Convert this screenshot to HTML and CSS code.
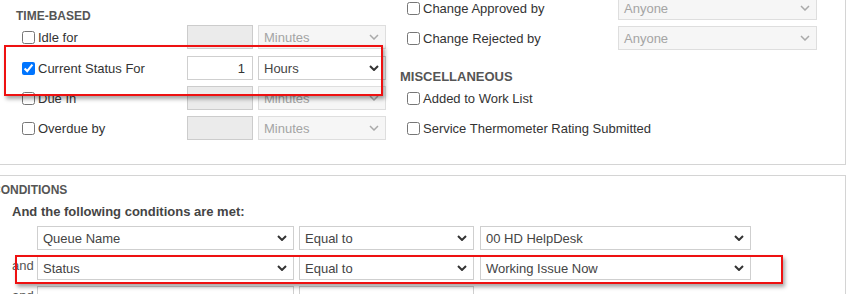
FILE: index.html
```html
<!DOCTYPE html>
<html lang="en">
<head>
    <meta charset="UTF-8">
    <title>Rule Triggers</title>
    <link rel="stylesheet" href="styles.css">
</head>
<body>
    <div class="page">
        <!-- Triggers panel -->
        <div class="panel triggers">
            <div class="col-left">
                <h3 class="section-title">TIME-BASED</h3>
                <div class="time-row first">
                    <label class="check"><input type="checkbox">Idle for</label>
                    <div class="num-input disabled"></div>
                    <div class="select disabled"><span>Minutes</span><svg width="10" height="6" viewBox="0 0 10 6"><polyline points="1,1 5,5 9,1"/></svg></div>
                </div>
                <div class="time-row">
                    <label class="check"><input type="checkbox" checked>Current Status For</label>
                    <div class="num-input">1</div>
                    <div class="select"><span>Hours</span><svg width="10" height="6" viewBox="0 0 10 6"><polyline points="1,1 5,5 9,1"/></svg></div>
                </div>
                <div class="time-row">
                    <label class="check"><input type="checkbox">Due In</label>
                    <div class="num-input disabled"></div>
                    <div class="select disabled"><span>Minutes</span><svg width="10" height="6" viewBox="0 0 10 6"><polyline points="1,1 5,5 9,1"/></svg></div>
                </div>
                <div class="time-row">
                    <label class="check"><input type="checkbox">Overdue by</label>
                    <div class="num-input disabled"></div>
                    <div class="select disabled"><span>Minutes</span><svg width="10" height="6" viewBox="0 0 10 6"><polyline points="1,1 5,5 9,1"/></svg></div>
                </div>
            </div>

            <div class="col-right">
                <div class="change-row">
                    <label class="check"><input type="checkbox">Change Approved by</label>
                    <div class="select disabled"><span>Anyone</span><svg width="10" height="6" viewBox="0 0 10 6"><polyline points="1,1 5,5 9,1"/></svg></div>
                </div>
                <div class="change-row">
                    <label class="check"><input type="checkbox">Change Rejected by</label>
                    <div class="select disabled"><span>Anyone</span><svg width="10" height="6" viewBox="0 0 10 6"><polyline points="1,1 5,5 9,1"/></svg></div>
                </div>
                <h3 class="section-title misc">MISCELLANEOUS</h3>
                <div class="misc-row">
                    <label class="check"><input type="checkbox">Added to Work List</label>
                </div>
                <div class="misc-row">
                    <label class="check"><input type="checkbox">Service Thermometer Rating Submitted</label>
                </div>
            </div>
        </div>

        <!-- Conditions panel -->
        <div class="panel conditions">
            <h3 class="section-title">CONDITIONS</h3>
            <div class="cond-body">
                <p class="cond-intro">And the following conditions are met:</p>
                <div class="cond-row">
                    <span class="joiner"></span>
                    <div class="select"><span>Queue Name</span><svg width="10" height="6" viewBox="0 0 10 6"><polyline points="1,1 5,5 9,1"/></svg></div>
                    <div class="select"><span>Equal to</span><svg width="10" height="6" viewBox="0 0 10 6"><polyline points="1,1 5,5 9,1"/></svg></div>
                    <div class="select"><span>00 HD HelpDesk</span><svg width="10" height="6" viewBox="0 0 10 6"><polyline points="1,1 5,5 9,1"/></svg></div>
                </div>
                <div class="cond-row">
                    <span class="joiner">and</span>
                    <div class="select"><span>Status</span><svg width="10" height="6" viewBox="0 0 10 6"><polyline points="1,1 5,5 9,1"/></svg></div>
                    <div class="select"><span>Equal to</span><svg width="10" height="6" viewBox="0 0 10 6"><polyline points="1,1 5,5 9,1"/></svg></div>
                    <div class="select"><span>Working Issue Now</span><svg width="10" height="6" viewBox="0 0 10 6"><polyline points="1,1 5,5 9,1"/></svg></div>
                </div>
                <div class="cond-row">
                    <span class="joiner">and</span>
                    <div class="select"><span>(Select an Attribute)</span><svg width="10" height="6" viewBox="0 0 10 6"><polyline points="1,1 5,5 9,1"/></svg></div>
                    <div class="select"><span>(Select an Operator)</span><svg width="10" height="6" viewBox="0 0 10 6"><polyline points="1,1 5,5 9,1"/></svg></div>
                </div>
            </div>
        </div>
    </div>

    <!-- Highlight boxes drawn over the form -->
    <div class="callout callout-status"></div>
    <div class="callout callout-condition"></div>
</body>
</html>
```

FILE: styles.css
```css
/* General Styling */
body {
    margin: 0;
    font-family: "Liberation Sans", Arial, sans-serif;
    font-size: 13px;
    color: #333;
    background-color: #ffffff;
    overflow: hidden;
    position: relative;
    height: 294px;
}

.page {
    margin: -14px 0 0 -20px;
    width: 866px;
}

.panel {
    border: 1px solid #d4d4d4;
    background-color: #ffffff;
}

.section-title {
    margin: 0;
    font-size: 12px;
    line-height: 16px;
    font-weight: bold;
    color: #555;
}

/* Checkboxes with labels */
.check {
    display: flex;
    align-items: center;
    white-space: nowrap;
}

.check input {
    width: 13px;
    height: 13px;
    margin: 0 3px 0 6px;
}

/* Fake select boxes */
.select {
    box-sizing: border-box;
    height: 24px;
    border: 1px solid #cfcfcf;
    background-color: #ffffff;
    color: #444;
    padding: 0 6px 0 5px;
    display: flex;
    align-items: center;
    justify-content: space-between;
    white-space: nowrap;
}

.select svg {
    fill: none;
    stroke: #333;
    stroke-width: 2;
}

.select.disabled {
    background-color: #f6f6f6;
    border-color: #dedede;
    color: #a4a4a4;
}

.select.disabled svg {
    stroke: #aaa;
    stroke-width: 1.5;
}

.num-input {
    box-sizing: border-box;
    height: 24px;
    border: 1px solid #cfcfcf;
    padding: 0 7px;
    display: flex;
    align-items: center;
    justify-content: flex-end;
    color: #333;
}

.num-input.disabled {
    background-color: #ebebeb;
    border-color: #cccccc;
}

/* Triggers panel */
.triggers {
    display: grid;
    grid-template-columns: 384px 1fr;
    padding: 0 0 24px 35px;
}

.col-left {
    padding-top: 21px;
    display: flex;
    flex-direction: column;
}

.col-left .section-title {
    margin-bottom: 1px;
}

.time-row {
    display: grid;
    grid-template-columns: 166px 66px 128px;
    column-gap: 5px;
    height: 24px;
    margin-top: 6px;
}

.time-row.first {
    margin-top: 0;
    margin-bottom: 1px;
}

.col-right {
    padding-top: 9px;
    display: flex;
    flex-direction: column;
}

.col-right .check input {
    margin-left: 7px;
}

.change-row {
    display: grid;
    grid-template-columns: 218px 199px;
    height: 24px;
    margin-bottom: 6px;
}

.section-title.misc {
    font-size: 13px;
    margin: 13px 0 1px;
}

.misc-row {
    height: 24px;
    display: flex;
    margin-bottom: 6px;
}

.misc-row:last-child {
    margin-bottom: 0;
}

/* Conditions panel */
.conditions {
    margin-top: 10px;
    padding: 6px 0 0 11px;
    height: 140px;
}

.cond-body {
    padding-left: 20px;
}

.cond-intro {
    margin: 6px 0 6px;
    font-weight: bold;
    line-height: 16px;
    color: #444;
}

.cond-row {
    display: grid;
    grid-template-columns: 20px 257px 175px 272px;
    column-gap: 5px;
    height: 24px;
    margin-bottom: 6px;
}

.cond-row .select:nth-child(4) {
    margin-left: 1px;
}

.joiner {
    color: #555;
    padding-top: 2px;
}

/* Red highlight boxes */
.callout {
    position: absolute;
    box-sizing: border-box;
    border: 2px solid #ee1111;
    box-shadow: 2px 3px 4px rgba(0, 0, 0, 0.35);
}

.callout-status {
    left: 4px;
    top: 45px;
    width: 379px;
    height: 51px;
}

.callout-condition {
    left: 15px;
    top: 255px;
    width: 768px;
    height: 29px;
}
```
